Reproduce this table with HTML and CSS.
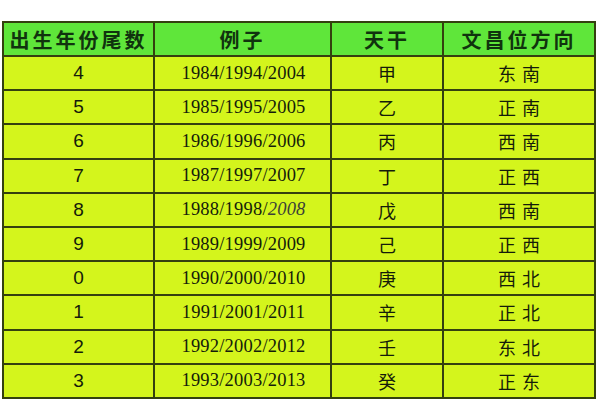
FILE: index.html
```html
<!DOCTYPE html>
<html>
<head>
<meta charset="utf-8">
<link rel="stylesheet" href="styles.css">
</head>
<body>
<table class="tbl">
  <colgroup>
    <col class="c1"><col class="c2"><col class="c3"><col class="c4">
  </colgroup>
  <thead>
    <tr class="head">
      <th>出生年份尾数</th><th>例子</th><th>天干</th><th>文昌位方向</th>
    </tr>
  </thead>
  <tbody>
    <tr><td class="num">4</td><td class="yr">1984/1994/2004</td><td class="cn">甲</td><td class="cn dir">东南</td></tr>
    <tr><td class="num">5</td><td class="yr">1985/1995/2005</td><td class="cn">乙</td><td class="cn dir">正南</td></tr>
    <tr><td class="num">6</td><td class="yr">1986/1996/2006</td><td class="cn">丙</td><td class="cn dir">西南</td></tr>
    <tr><td class="num">7</td><td class="yr">1987/1997/2007</td><td class="cn">丁</td><td class="cn dir">正西</td></tr>
    <tr><td class="num">8</td><td class="yr">1988/1998/<span class="wm">2008</span></td><td class="cn">戊</td><td class="cn dir">西南</td></tr>
    <tr><td class="num">9</td><td class="yr">1989/1999/2009</td><td class="cn">己</td><td class="cn dir">正西</td></tr>
    <tr><td class="num">0</td><td class="yr">1990/2000/2010</td><td class="cn">庚</td><td class="cn dir">西北</td></tr>
    <tr><td class="num">1</td><td class="yr">1991/2001/2011</td><td class="cn">辛</td><td class="cn dir">正北</td></tr>
    <tr><td class="num">2</td><td class="yr">1992/2002/2012</td><td class="cn">壬</td><td class="cn dir">东北</td></tr>
    <tr><td class="num">3</td><td class="yr">1993/2003/2013</td><td class="cn">癸</td><td class="cn dir">正东</td></tr>
  </tbody>
</table>
</body>
</html>
```
FILE: styles.css
```css
html, body {
  margin: 0;
  padding: 0;
  background: #ffffff;
  width: 600px;
  height: 400px;
  overflow: hidden;
}
.tbl {
  margin: 21px 0 0 2px;
  border-collapse: collapse;
  table-layout: fixed;
  width: 592px;
}
.c1 { width: 151px; }
.c2 { width: 177px; }
.c3 { width: 112px; }
.c4 { width: 152px; }
.tbl th, .tbl td {
  border: 2px solid #34400f;
  padding: 0;
  text-align: center;
  vertical-align: middle;
  color: #141c0a;
}
.head th {
  height: 32px;
  background: #5fe63a;
  font-family: "Noto Sans CJK SC", sans-serif;
  font-weight: 700;
  font-size: 20px;
  letter-spacing: 3px;
  color: #10330e;
}
.tbl td {
  height: 32.2px;
  background: #d4f51c;
}
.num {
  font-family: "Liberation Sans", Arial, sans-serif;
  font-size: 19px;
  color: #2a3418;
}
.yr {
  font-family: "Liberation Serif", "Times New Roman", serif;
  font-size: 18.5px;
  letter-spacing: 0.2px;
  padding-left: 2px !important;
}
.cn {
  font-family: "Noto Sans CJK SC", sans-serif;
  font-size: 18px;
}
.dir {
  letter-spacing: 6px;
  text-indent: 6px;
}
.wm {
  color: #3b3f38;
  font-style: italic;
}
```
